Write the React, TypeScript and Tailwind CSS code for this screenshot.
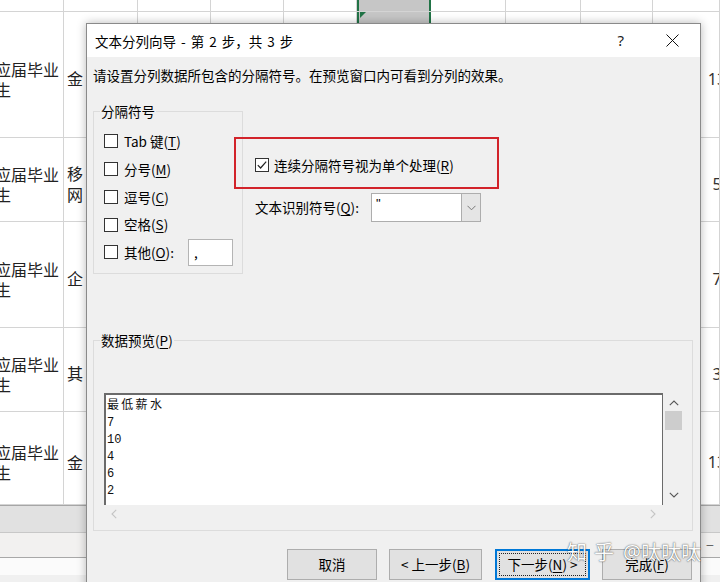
import React from "react";

const cols = [64, 74, 73, 73, 73, 74, 75, 75, 72, 67];

function U({ c }: { c: string }) {
  return <span className="underline underline-offset-[2px] decoration-[1px]">{c}</span>;
}

function Box({ checked }: { checked?: boolean }) {
  return (
    <span className="inline-flex w-[14px] h-[14px] border border-[#333] bg-white items-center justify-center shrink-0">
      {checked && (
        <svg width="12" height="12" viewBox="0 0 12 12">
          <path d="M1.8 6.2 L4.6 9 L10.2 2.6" fill="none" stroke="#222" strokeWidth="1.2" />
        </svg>
      )}
    </span>
  );
}

type RowDef = { h: number; b: React.ReactNode; z: string };

const rows: RowDef[] = [
  { h: 126, b: "金", z: "13" },
  { h: 84, b: (<>移<br />网</>), z: "5" },
  { h: 106, b: "企", z: "7" },
  { h: 84, b: "其", z: "3" },
  { h: 93, b: "金", z: "13" },
];

function SheetRow({ r, first }: { r: RowDef; first: boolean }) {
  return (
    <div className="flex border-b border-[#d4d4d4] box-border" style={{ height: r.h }}>
      {cols.map((w, i) => (
        <div
          key={i}
          className={
            "relative box-border overflow-hidden flex items-center pt-[8px] shrink-0 " +
            (i === 5 && first ? "bg-[#c6c6c6] border-l-2 border-r-2 border-[#217346]" : "border-r border-[#d4d4d4]")
          }
          style={{ width: w }}
        >
          {i === 5 && first && (
            <span className="absolute left-[1px] top-0 w-0 h-0 border-t-[6px] border-t-[#217346] border-r-[6px] border-r-transparent" />
          )}
          {i === 0 && (
            <div className="ml-[-5px] shrink-0 text-[16px] leading-[20px] whitespace-nowrap text-[#222]">
              应届毕业<br />生
            </div>
          )}
          {i === 1 && <div className="ml-[3px] shrink-0 text-[16px] leading-[21px] text-[#222]">{r.b}</div>}
          {i === 9 && (
            <div className="ml-[46px] w-[36px] shrink-0 text-center text-[16px] leading-[20px] text-[#333] [font-family:'Noto_Sans',sans-serif]">
              {r.z}
            </div>
          )}
        </div>
      ))}
    </div>
  );
}

function Btn({ w, children, primary }: { w: number; children: React.ReactNode; primary?: boolean }) {
  return (
    <div
      className={
        "h-[31px] flex items-center justify-center bg-[#e1e1e1] box-border " +
        (primary ? "border-2 border-[#0078d7] p-[2px]" : "border border-[#adadad]")
      }
      style={{ width: w }}
    >
      {primary ? (
        <div className="w-full h-full border border-dotted border-[#222] flex items-center justify-center">{children}</div>
      ) : (
        children
      )}
    </div>
  );
}

export default function App() {
  return (
    <div className="relative w-[720px] h-[582px] overflow-hidden bg-white [font-family:'Noto_Sans_CJK_SC','Noto_Sans',sans-serif] text-[#000]">
      {/* spreadsheet */}
      <div className="flex flex-col">
        <div className="flex h-[12px] border-b border-[#d4d4d4] box-border">
          {cols.map((w, i) => (
            <div
              key={i}
              className={
                "box-border h-full shrink-0 " +
                (i === 5 ? "bg-[#c6c6c6] border-l-2 border-r-2 border-[#217346]" : "border-r border-[#d4d4d4]")
              }
              style={{ width: w }}
            />
          ))}
        </div>
        {rows.map((r, i) => (
          <SheetRow key={i} r={r} first={i === 0} />
        ))}
        <div className="h-[27px] bg-[#e1e1e1] border-t border-[#a6a6a6]" />
        <div className="h-[25px] bg-[#f2f1f0] border-t border-[#c8c8c8]" />
        <div className="h-[18px] bg-[#fbfbfb] border-t border-[#a8a8a8]" />
        <div className="h-[20px] bg-[#f0f0f0]" />
      </div>
      <div className="absolute left-[706px] top-[535px] text-[14px] text-[#666]">−</div>

      {/* dialog */}
      <div className="absolute left-[86px] top-[23px] w-[615px] h-[570px] flex flex-col border border-[#8a8a8a] bg-[#f0f0f0] shadow-[0_0_9px_rgba(0,0,0,0.28)] text-[13.5px]">
        <div className="h-[33px] bg-white flex items-center pl-[8px] shrink-0">
          <span className="leading-[20px] [word-spacing:2px]">文本分列向导 - 第 2 步，共 3 步</span>
          <span className="ml-auto mr-[42px] text-[15px] text-[#222] [font-family:'Noto_Sans',sans-serif]">?</span>
          <svg className="mr-[21px]" width="13" height="13" viewBox="0 0 13 13">
            <path d="M0.5 0.5 L12.5 12.5 M12.5 0.5 L0.5 12.5" stroke="#111" strokeWidth="1" />
          </svg>
        </div>

        <div className="relative flex-1 pl-[6px] pr-[7px]">
          <div className="pt-[8px] leading-[20px]">请设置分列数据所包含的分隔符号。在预览窗口内可看到分列的效果。</div>

          <div className="mt-[16px] flex">
            <fieldset className="w-[150px] h-[173px] border border-[#dcdcdc] m-0 p-0">
              <legend className="ml-[6px] leading-[20px] px-[1px]">分隔符号</legend>
              <div className="pt-[6px] pl-[10px] flex flex-col">
                <div className="h-[28px] flex items-center gap-[6px]"><Box /><span>Tab 键(<U c="T" />)</span></div>
                <div className="h-[28px] flex items-center gap-[6px]"><Box /><span>分号(<U c="M" />)</span></div>
                <div className="h-[28px] flex items-center gap-[6px]"><Box /><span>逗号(<U c="C" />)</span></div>
                <div className="h-[27px] flex items-center gap-[6px]"><Box /><span>空格(<U c="S" />)</span></div>
                <div className="h-[28px] flex items-center gap-[6px]">
                  <Box />
                  <span>其他(<U c="O" />):</span>
                  <div className="ml-[8px] w-[45px] h-[27px] bg-white border border-[#b4b4b4] pl-[5px] leading-[24px]">,</div>
                </div>
              </div>
            </fieldset>

            <div className="ml-[12px] flex flex-col">
              <div className="mt-[54px] h-[20px] flex items-center gap-[5px]">
                <Box checked />
                <span>连续分隔符号视为单个处理(<U c="R" />)</span>
              </div>
              <div className="mt-[18px] h-[29px] flex items-center">
                <span className="w-[116px]">文本识别符号(<U c="Q" />):</span>
                <div className="w-[110px] h-[29px] flex bg-white border border-[#adadad] box-border">
                  <div className="flex-1 pl-[4px] pt-[1px] text-[13px] leading-[18px] [font-family:'Liberation_Sans',sans-serif]">"</div>
                  <div className="w-[19px] h-full bg-[#e5e5e5] border-l border-[#adadad] flex items-center justify-center">
                    <svg width="9" height="6" viewBox="0 0 9 6">
                      <path d="M0.5 0.8 L4.5 4.8 L8.5 0.8" fill="none" stroke="#777" strokeWidth="1" />
                    </svg>
                  </div>
                </div>
              </div>
            </div>
          </div>

          {/* red annotation */}
          <div className="absolute left-[147px] top-[80px] w-[265px] h-[52px] border-2 border-[#d2232a]" />

          <fieldset className="mt-[56px] w-[600px] h-[201px] border border-[#dcdcdc] m-0 p-0">
            <legend className="ml-[6px] leading-[20px] px-[1px]">数据预览(<U c="P" />)</legend>
            <div className="mt-[43px] pl-[10px] flex flex-col">
              <div className="flex h-[112px]">
                <div className="w-[559px] h-full bg-white border-l-2 border-t-2 border-r border-[#6b6b6b] box-border pl-[1px] pt-[3px] text-[12px] leading-[17px] [font-family:'Liberation_Mono','Noto_Sans_CJK_SC',monospace] text-[#111]">
                  <div className="tracking-[2.3px]">最低薪水</div>
                  <div>7</div>
                  <div>10</div>
                  <div>4</div>
                  <div>6</div>
                  <div>2</div>
                </div>
                <div className="w-[21px] h-full flex flex-col items-center">
                  <svg className="mt-[7px]" width="10" height="6" viewBox="0 0 10 6">
                    <path d="M0.8 5.2 L5 1 L9.2 5.2" fill="none" stroke="#555" strokeWidth="1.1" />
                  </svg>
                  <div className="mt-[5px] w-[17px] h-[19px] bg-[#cdcdcd]" />
                  <svg className="mt-auto mb-[7px]" width="10" height="6" viewBox="0 0 10 6">
                    <path d="M0.8 0.8 L5 5 L9.2 0.8" fill="none" stroke="#555" strokeWidth="1.1" />
                  </svg>
                </div>
              </div>
              <div className="w-[559px] h-[17px] flex items-center justify-between px-[7px]">
                <svg width="6" height="10" viewBox="0 0 6 10">
                  <path d="M5.2 0.8 L1 5 L5.2 9.2" fill="none" stroke="#c4c4c4" strokeWidth="1.1" />
                </svg>
                <svg width="6" height="10" viewBox="0 0 6 10">
                  <path d="M0.8 0.8 L5 5 L0.8 9.2" fill="none" stroke="#c4c4c4" strokeWidth="1.1" />
                </svg>
              </div>
            </div>
          </fieldset>

          <div className="mt-[18px] flex justify-end pr-[1px]">
            <Btn w={90}>取消</Btn>
            <div className="ml-[12px]"><Btn w={93}>&lt; 上一步(<U c="B" />)</Btn></div>
            <div className="ml-[13px]"><Btn w={95} primary>下一步(<U c="N" />) &gt;</Btn></div>
            <div className="ml-[12px]"><Btn w={90}>完成(<U c="F" />)</Btn></div>
          </div>
        </div>
      </div>

      {/* watermark */}
      <div className="absolute left-[567px] top-[539px] flex items-center text-[20px] leading-[26px] text-white [text-shadow:0_0_1px_rgba(0,0,0,0.7),0_0_2px_rgba(0,0,0,0.4)] opacity-90">
        <span className="tracking-[7px]">知乎</span>
        <span className="ml-[2px] [font-family:'Noto_Sans',sans-serif]">@</span>
        <span>呔呔呔</span>
      </div>
    </div>
  );
}
